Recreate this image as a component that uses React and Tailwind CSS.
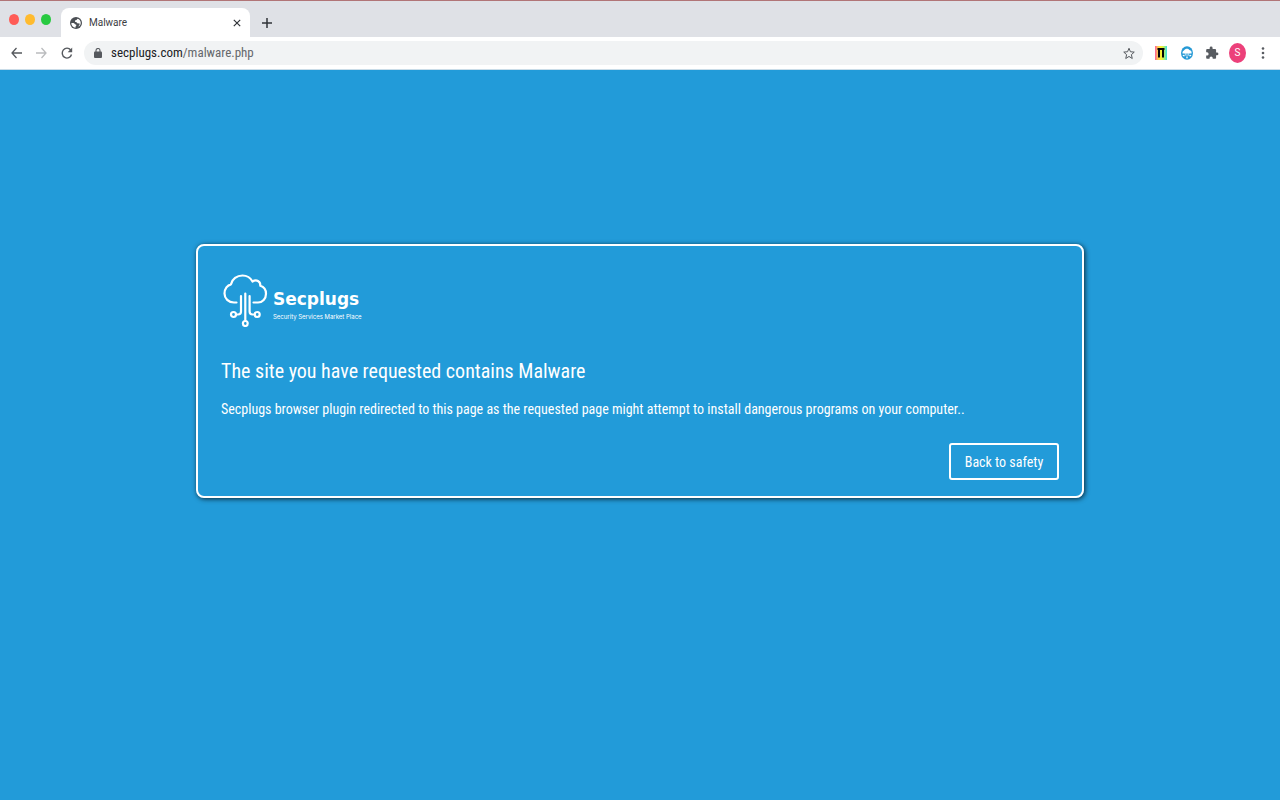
import React from "react";

function Globe() {
  return (
    <svg className="h-3 w-3 shrink-0" viewBox="0 0 24 24" aria-hidden="true">
      <circle cx="12" cy="12" r="12" fill="#4b4f54" />
      <path d="M2.500 12.500C6 11.500 9 12.500 10 14.500l2.500 1c1 1-1 3-1.500 4v1.800C6 21 2.500 17 2.500 12.500z" fill="#fff" />
      <path d="M15 3.500l-2 2.500-3 1v2.500l3 1 2.500 2.500 3-.5 1 2-2 3-.5 2c2.500-1.500 4.500-4 4.500-7.500C21.500 8 19 4.500 15 3.500z" fill="#fff" />
    </svg>
  );
}

function TabBar() {
  return (
    <header className="flex h-[37px] items-end border-t border-[#b17577] bg-[#dfe1e6]">
      <div className="flex h-full w-[61px] shrink-0 items-center gap-[6px] pl-[9px]">
        <button aria-label="Close window" className="h-[11px] w-[10px] rounded-[50%] bg-[#ff5c56]" />
        <button aria-label="Minimize window" className="h-[11px] w-[10px] rounded-[50%] bg-[#ffbb2e]" />
        <button aria-label="Zoom window" className="h-[11px] w-[10px] rounded-[50%] bg-[#28ca41]" />
      </div>
      <div className="flex h-[29px] w-[189px] items-center rounded-t-lg bg-white pr-2 pl-[9px]">
        <Globe />
        <span className="ml-[7px] flex-1 text-[10px] leading-4 text-[#3c4043]">Malware</span>
        <button aria-label="Close tab" className="flex h-[10px] w-[10px] items-center justify-center">
          <svg className="h-2 w-2" viewBox="0 0 8 8" stroke="#303338" strokeWidth="1.2">
            <path d="M.8.8l6.400 6.400M7.200.8L.8 7.200" />
          </svg>
        </button>
      </div>
      <button aria-label="New tab" className="ml-3 flex h-[29px] w-[10px] items-center justify-center">
        <svg className="h-[10px] w-[10px]" viewBox="0 0 10 10" stroke="#303338" strokeWidth="1.5">
          <path d="M5 0v10M0 5h10" />
        </svg>
      </button>
    </header>
  );
}

function Toolbar() {
  return (
    <nav className="flex h-[33px] items-center border-b border-[#c9dce8] bg-white pr-3 pl-[11px]">
      <button aria-label="Back" className="h-3 w-[11px]">
        <svg className="h-3 w-[11px]" viewBox="0 0 11 12" fill="none" stroke="#56595e" strokeWidth="1.3">
          <path d="M11 6H1M5.500 1L1 6l4.500 5" />
        </svg>
      </button>
      <button aria-label="Forward" className="ml-[14px] h-3 w-[11px]">
        <svg className="h-3 w-[11px]" viewBox="0 0 11 12" fill="none" stroke="#babcbe" strokeWidth="1.3">
          <path d="M0 6h10M5.500 1L10 6l-4.500 5" />
        </svg>
      </button>
      <button aria-label="Reload" className="ml-[14px] h-3 w-3">
        <svg className="h-3 w-3" viewBox="0 0 12 12">
          <path d="M10.500 7.500A4.700 5 0 1 1 9.700 3" fill="none" stroke="#56595e" strokeWidth="1.4" />
          <path d="M11.200.5v4.800H6.700z" fill="#56595e" />
        </svg>
      </button>
      <div className="ml-[11px] flex h-6 flex-1 items-center rounded-full bg-[#f1f3f4] pr-2 pl-[10px]">
        <svg className="h-[10px] w-2 shrink-0" viewBox="0 0 8 10" aria-hidden="true">
          <path d="M2 4V2.500a2 2 0 0 1 4 0V4" fill="none" stroke="#56595e" strokeWidth="1.100" />
          <rect y="3.500" width="8" height="6.500" rx="1" fill="#56595e" />
        </svg>
        <a href="#malware" className="ml-[9px] flex-1 font-['Roboto_Condensed',Roboto,sans-serif] text-[13px] leading-4 text-[#65686c]">
          <span className="text-[#202124]">secplugs.com</span>/malware.php
        </a>
        <button aria-label="Bookmark this page" className="h-[13px] w-3">
          <svg className="h-[13px] w-3" viewBox="0 0 24 26" fill="none" stroke="#55595e" strokeWidth="2">
            <path d="M12 2.500l2.900 7 7.600.7-5.700 5.100 1.700 7.700-6.500-4.100L5.500 23l1.700-7.700-5.700-5.100 7.600-.7z" />
          </svg>
        </button>
      </div>
      <div className="ml-3 flex items-center">
        <button aria-label="Rainbow extension" className="flex h-[14px] w-3 items-center justify-center bg-[linear-gradient(90deg,#ff5a9b,#ffc35a_22%,#fff32e_50%,#b5f268_75%,#35dfe7)]">
          <svg className="h-[10px] w-2" viewBox="0 0 8 10" fill="#050505">
            <path d="M.5 0h7v2H7v7.500H5V2H3v7.500H1V2H.5z" />
          </svg>
        </button>
        <button aria-label="Secplugs extension" className="ml-[14px] h-[14px] w-3">
          <svg className="h-[14px] w-3" viewBox="0 0 12 14">
            <ellipse cx="6" cy="7" rx="6" ry="6.700" fill="#2599d5" />
            <path d="M1.500 7.500C1.200 5.500 2.500 4.800 3 4.500 4 2.300 7.500 2.300 8.300 4c2 .2 2.700 2 2.200 3.500z" fill="#fff" />
            <path d="M4.300 7v2.500L2.800 10M6 7v4.500M7.700 7v2.500l1.500.5" fill="none" stroke="#dff2fb" strokeWidth=".8" />
            <circle cx="2.500" cy="9.500" r=".8" fill="#fff" />
            <circle cx="9.500" cy="9.500" r=".8" fill="#fff" />
            <circle cx="6" cy="11.700" r=".8" fill="#fff" />
          </svg>
        </button>
        <button aria-label="Extensions" className="ml-3 h-[14px] w-[14px]">
          <svg className="h-[14px] w-[14px]" viewBox="0 0 24 24" fill="#585c61">
            <path d="M20.500 11H19V7c0-1.100-.9-2-2-2h-4V3.500a2.500 2.500 0 0 0-5 0V5H4c-1.100 0-2 .9-2 2v3.800h1.500a2.700 2.700 0 0 1 0 5.400H2V20c0 1.100.9 2 2 2h3.800v-1.500a2.700 2.700 0 0 1 5.400 0V22H17c1.100 0 2-.9 2-2v-4h1.500a2.500 2.500 0 0 0 0-5z" />
          </svg>
        </button>
        <button aria-label="Profile" className="ml-[10px] flex h-5 w-[17px] items-center justify-center rounded-[50%] bg-[#ec407a] text-[10px] leading-4 text-white">
          S
        </button>
        <button aria-label="Menu" className="ml-3 h-3 w-[10px]">
          <svg className="h-3 w-[10px]" viewBox="0 0 10 12" fill="#585c61">
            <circle cx="5" cy="1.500" r="1.300" />
            <circle cx="5" cy="6" r="1.300" />
            <circle cx="5" cy="10.500" r="1.300" />
          </svg>
        </button>
      </div>
    </nav>
  );
}

function Logo() {
  return (
    <div className="flex h-14 items-start gap-[5px] pl-[2px]">
      <svg className="h-14 w-[45px] shrink-0" viewBox="0 0 45 56" fill="none" stroke="#fff" strokeWidth="2.200" aria-hidden="true">
        <path d="M13.500 31.500H11C5.500 31.500 1.500 27.500 1.500 22.500c0-5 3-8.500 6.500-9.200C9 8 14 4.500 19.500 4.500c4.500 0 8 2.300 10 6 4-2.500 8-.2 7.800 4.200 3.500 1 5.700 4.300 5.700 8 0 5-3.500 8.800-8 8.800h-4.500" strokeLinecap="round" strokeLinejoin="round" />
        <path d="M18 25v15.500c0 2.300-1 3-3 3h-2M22.300 22.500v27.500M26.600 25v15.500c0 2.300 1 3 3 3h2" strokeLinecap="round" />
        <circle cx="10.500" cy="43.500" r="2.500" />
        <circle cx="34.200" cy="43.500" r="2.500" />
        <ellipse cx="22.300" cy="52.500" rx="2.400" ry="2.500" />
      </svg>
      <div className="pt-4 text-white">
        <div className="font-['DejaVu_Sans',sans-serif] text-[17px] leading-6 font-bold">Secplugs</div>
        <div className="font-[Inter,sans-serif] text-[6px] leading-3">Security Services Market Place</div>
      </div>
    </div>
  );
}

export default function App() {
  return (
    <div className="flex min-h-screen flex-col bg-[#229bd9] font-[Roboto,sans-serif]">
      <TabBar />
      <Toolbar />
      <main className="flex flex-1 justify-center px-4 pt-[174px] pb-16">
        <section className="w-full max-w-[888px] self-start rounded-lg border-2 border-white px-[23px] pt-[25px] pb-4 font-['Roboto_Condensed',Roboto,sans-serif] text-white shadow-[1px_1px_5px_rgba(0,0,0,0.75)]">
          <Logo />
          <h1 className="mt-7 text-[20px] leading-8">The site you have requested contains Malware</h1>
          <p className="mt-3 text-[14px] leading-5">
            Secplugs browser plugin redirected to this page as the requested page might attempt to install dangerous programs on your computer..
          </p>
          <div className="mt-6 flex justify-end">
            <button className="h-[37px] w-[110px] rounded-[3px] border-2 border-white text-[14px] leading-5">Back to safety</button>
          </div>
        </section>
      </main>
    </div>
  );
}
